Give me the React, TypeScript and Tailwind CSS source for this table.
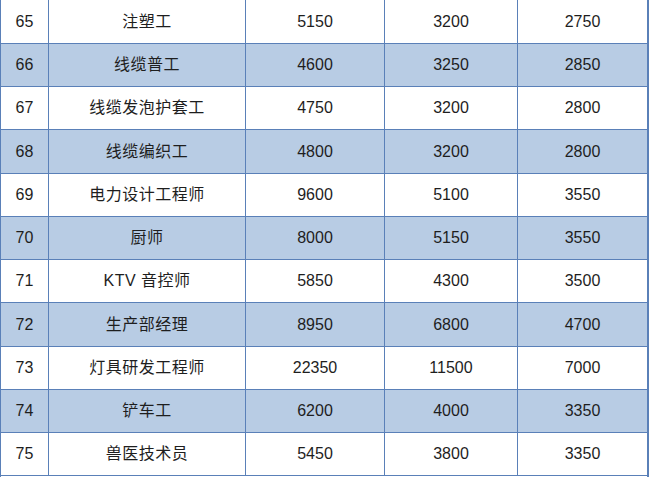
import React from "react";

const rows: [string, string, string, string, string][] = [
  ["65", "注塑工", "5150", "3200", "2750"],
  ["66", "线缆普工", "4600", "3250", "2850"],
  ["67", "线缆发泡护套工", "4750", "3200", "2800"],
  ["68", "线缆编织工", "4800", "3200", "2800"],
  ["69", "电力设计工程师", "9600", "5100", "3550"],
  ["70", "厨师", "8000", "5150", "3550"],
  ["71", "KTV 音控师", "5850", "4300", "3500"],
  ["72", "生产部经理", "8950", "6800", "4700"],
  ["73", "灯具研发工程师", "22350", "11500", "7000"],
  ["74", "铲车工", "6200", "4000", "3350"],
  ["75", "兽医技术员", "5450", "3800", "3350"],
];

const tall = [true, false, false, true, false, false, false, true, false, false, false];

export default function App() {
  return (
    <div
      className="w-[649px] h-[477px] overflow-hidden bg-white border-l border-r-2 border-[#5a80b8] text-[16px] text-[#1e1e1e]"
      style={{ fontFamily: '"Liberation Sans", "Noto Sans CJK SC", sans-serif' }}
    >
      {rows.map((r, i) => (
        <div
          key={r[0]}
          className={`grid grid-cols-[48px_197px_139px_133px_1fr] border-b border-[#5a80b8] ${
            tall[i] ? "h-[44px]" : "h-[43px]"
          } ${i % 2 === 1 ? "bg-[#b8cce4]" : "bg-white"}`}
        >
          {r.map((c, j) => (
            <div
              key={j}
              className={`flex items-center justify-center ${
                j < 4 ? "border-r border-[#5a80b8]" : ""
              } ${j === 1 ? "tracking-[0.5px]" : ""}`}
            >
              {c}
            </div>
          ))}
        </div>
      ))}
    </div>
  );
}
